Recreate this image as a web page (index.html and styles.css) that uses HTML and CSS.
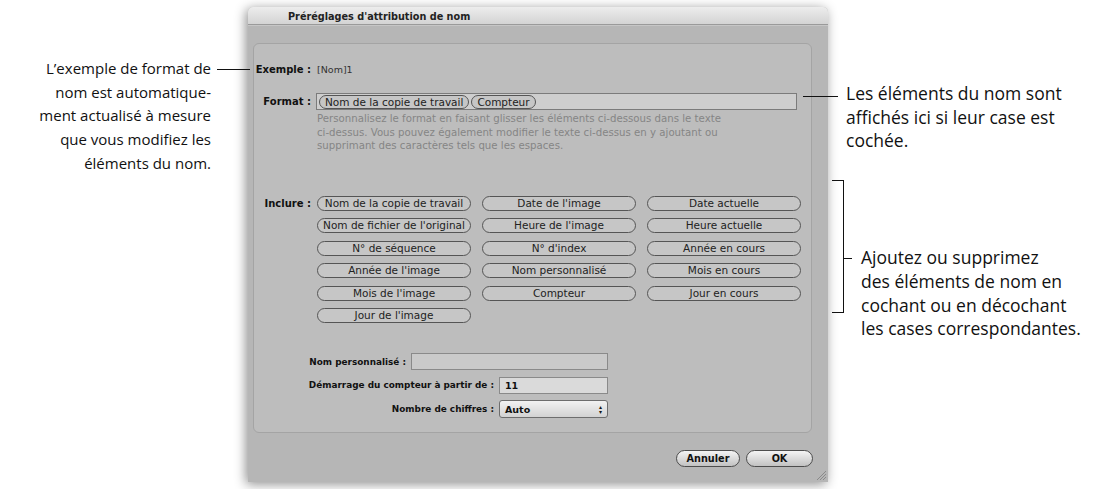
FILE: index.html
```html
<!DOCTYPE html>
<html lang="fr">
<head>
  <meta charset="UTF-8" />
  <title>Préréglages d'attribution de nom</title>
  <link rel="stylesheet" href="styles.css">
</head>
<body>
  <div class="page">
    <!-- Légende de gauche -->
    <div class="notes-left">
      <div class="note note-example">
        <p>L’exemple de format de<br>nom est automatique-<br>ment actualisé à mesure<br>que vous modifiez les<br>éléments du nom.</p>
        <span class="leader"></span>
      </div>
    </div>

    <!-- Fenêtre -->
    <div class="window">
      <div class="titlebar">Préréglages d'attribution de nom</div>
      <div class="body">
        <div class="panel">
          <div class="row example">
            <span class="label">Exemple :</span>
            <span class="value">[Nom]1</span>
          </div>
          <div class="row format">
            <span class="label">Format :</span>
            <div class="format-field">
              <span class="token">Nom de la copie de travail</span><span class="token">Compteur</span>
            </div>
          </div>
          <p class="hint">Personnalisez le format en faisant glisser les éléments ci-dessous dans le texte<br>ci-dessus. Vous pouvez également modifier le texte ci-dessus en y ajoutant ou<br>supprimant des caractères tels que les espaces.</p>
          <div class="row include">
            <span class="label">Inclure :</span>
            <div class="token-grid">
              <span class="pill">Nom de la copie de travail</span>
              <span class="pill">Date de l'image</span>
              <span class="pill">Date actuelle</span>
              <span class="pill">Nom de fichier de l'original</span>
              <span class="pill">Heure de l'image</span>
              <span class="pill">Heure actuelle</span>
              <span class="pill">N° de séquence</span>
              <span class="pill">N° d'index</span>
              <span class="pill">Année en cours</span>
              <span class="pill">Année de l'image</span>
              <span class="pill">Nom personnalisé</span>
              <span class="pill">Mois en cours</span>
              <span class="pill">Mois de l'image</span>
              <span class="pill">Compteur</span>
              <span class="pill">Jour en cours</span>
              <span class="pill">Jour de l'image</span>
            </div>
          </div>
          <div class="options">
            <div class="opt">
              <span class="opt-label">Nom personnalisé :</span>
              <span class="input input-wide"></span>
            </div>
            <div class="opt">
              <span class="opt-label">Démarrage du compteur à partir de :</span>
              <span class="input input-light">11</span>
            </div>
            <div class="opt">
              <span class="opt-label">Nombre de chiffres :</span>
              <span class="popup">Auto<span class="arrows">▴<br>▾</span></span>
            </div>
          </div>
        </div>
        <div class="buttons">
          <span class="btn">Annuler</span>
          <span class="btn btn-ok">OK</span>
        </div>
        <svg class="grip" width="10" height="10" viewBox="0 0 10 10">
          <path d="M1 10 L10 1 M4 10 L10 4 M7 10 L10 7" stroke="#8a8a8a" stroke-width="1" fill="none"/>
        </svg>
      </div>
    </div>

    <!-- Légendes de droite -->
    <div class="notes-right">
      <div class="note note-format">
        <span class="leader"></span>
        <p>Les éléments du nom sont<br>affichés ici si leur case est<br>cochée.</p>
      </div>
      <div class="note note-include">
        <span class="bracket"></span>
        <span class="tick"></span>
        <p>Ajoutez ou supprimez<br>des éléments de nom en<br>cochant ou en décochant<br>les cases correspondantes.</p>
      </div>
    </div>
  </div>
</body>
</html>
```

FILE: styles.css
```css
body {
  margin: 0;
  background: #fff;
  font-family: 'DejaVu Sans', sans-serif;
  color: #111;
}

.page {
  display: flex;
  align-items: flex-start;
  width: 1096px;
  height: 489px;
  overflow: hidden;
}

/* légendes */
.note p {
  margin: 0;
  font-family: 'Open Sans', sans-serif;
  font-size: 17.5px;
  line-height: 23.7px;
  color: #111;
  white-space: nowrap;
}

.leader {
  display: block;
  height: 1px;
  background: #111;
}

.notes-left {
  width: 248px;
  flex-shrink: 0;
}

.note-example {
  display: flex;
  justify-content: flex-end;
  align-items: flex-start;
  margin-top: 57px;
}

.note-example p {
  font-size: 15px;
  text-align: right;
}

.note-example .leader {
  width: 33px;
  margin: 12px -2px 0 6px;
  position: relative;
  z-index: 2;
}

.notes-right {
  flex: 1;
}

.note-format {
  display: flex;
  align-items: flex-start;
  margin-top: 82px;
}

.note-format .leader {
  width: 35px;
  margin: 14px 8px 0 -25px;
  position: relative;
  z-index: 2;
}

.note-include {
  display: flex;
  align-items: flex-start;
  margin-top: 27px;
}

.bracket {
  width: 11px;
  height: 131px;
  margin-left: 4px;
  border: 1px solid #111;
  border-left: none;
}

.tick {
  width: 8px;
  height: 1px;
  margin-top: 78px;
  background: #111;
}

.note-include p {
  margin-top: 66px;
  margin-left: 9px;
}

/* fenêtre */
.window {
  width: 580px;
  height: 475px;
  margin-top: 7px;
  flex-shrink: 0;
  border-radius: 5px 5px 0 0;
  background: #b6b6b6;
  box-shadow: -2px 2px 12px rgba(0,0,0,0.45);
}

.titlebar {
  height: 17px;
  padding-left: 40px;
  border-radius: 5px 5px 0 0;
  border-bottom: 1px solid #9a9a9a;
  background: linear-gradient(#ededed, #d3d3d3);
  font-size: 9.7px;
  font-weight: bold;
  line-height: 19px;
  color: #222;
}

.body {
  position: relative;
  height: 457px;
  padding: 17px 16px 0 5px;
  box-sizing: border-box;
  border-top: 1px solid #c6c6c6;
}

.panel {
  height: 390px;
  box-sizing: border-box;
  padding-top: 18px;
  border: 1px solid #a4a4a4;
  border-radius: 6px;
  background: #bdbdbd;
  font-size: 10.5px;
}

.row {
  display: flex;
  align-items: center;
}

.label {
  width: 57px;
  margin-right: 5px;
  flex-shrink: 0;
  text-align: right;
  font-size: 10px;
  font-weight: bold;
  white-space: nowrap;
}

.example {
  height: 15px;
}

.value {
  margin-left: 1px;
  font-size: 9.5px;
  color: #333;
}

.format {
  margin-top: 16px;
}

.format-field {
  display: flex;
  align-items: center;
  width: 481px;
  height: 17px;
  box-sizing: border-box;
  padding-left: 2px;
  border: 1px solid #7b7b7b;
  background: #cecece;
}

.token,
.pill {
  height: 15px;
  box-sizing: border-box;
  padding: 0 4px;
  border: 1px solid #555;
  border-radius: 8px;
  background: #c6c6c6;
  line-height: 13px;
  color: #222;
  white-space: nowrap;
}

.format-field .token {
  height: 14px;
  line-height: 12px;
  margin-right: 2px;
  padding: 0 5px;
}

.hint {
  margin: 2px 0 0 63px;
  font-size: 10.2px;
  line-height: 13.5px;
  color: #858585;
}

.include {
  align-items: flex-start;
  margin-top: 43px;
}

.include .label {
  line-height: 15px;
}

.token-grid {
  display: grid;
  grid-template-columns: repeat(3, 154px);
  column-gap: 11px;
  row-gap: 7.6px;
  margin-left: 1px;
}

.pill {
  text-align: center;
  overflow: hidden;
}

.options {
  width: 354px;
  margin-top: 30px;
  display: flex;
  flex-direction: column;
  gap: 6.5px;
}

.opt {
  display: flex;
  justify-content: flex-end;
  align-items: center;
}

.opt-label {
  flex-shrink: 0;
  margin-right: 5px;
  font-size: 8.9px;
  font-weight: bold;
  white-space: nowrap;
}

.input {
  height: 17px;
  width: 109px;
  flex-shrink: 0;
  box-sizing: border-box;
  padding-left: 5px;
  border: 1px solid #8a8a8a;
  background: #cacaca;
  font-size: 9.5px;
  font-weight: bold;
  line-height: 15px;
}

.input-wide {
  width: 197px;
}

.input-light {
  background: #dadada;
}

.popup {
  display: flex;
  justify-content: space-between;
  align-items: center;
  width: 109px;
  height: 18px;
  flex-shrink: 0;
  box-sizing: border-box;
  padding: 0 5px;
  border: 1px solid #6d6d6d;
  border-radius: 3px;
  background: linear-gradient(#f2f2f2, #d2d2d2);
  font-size: 9.5px;
  font-weight: bold;
}

.arrows {
  font-size: 6px;
  line-height: 5px;
  text-align: center;
}

.buttons {
  display: flex;
  justify-content: flex-end;
  gap: 6px;
  margin-top: 17px;
  margin-right: -1px;
}

.btn {
  width: 64px;
  height: 17px;
  box-sizing: border-box;
  border: 1px solid #4d4d4d;
  border-radius: 9px;
  background: linear-gradient(#f4f4f4, #c2c2c2);
  font-size: 9.7px;
  font-weight: bold;
  line-height: 15px;
  text-align: center;
}

.btn-ok {
  width: 67px;
}

.grip {
  position: absolute;
  right: 2px;
  bottom: 2px;
}
```
